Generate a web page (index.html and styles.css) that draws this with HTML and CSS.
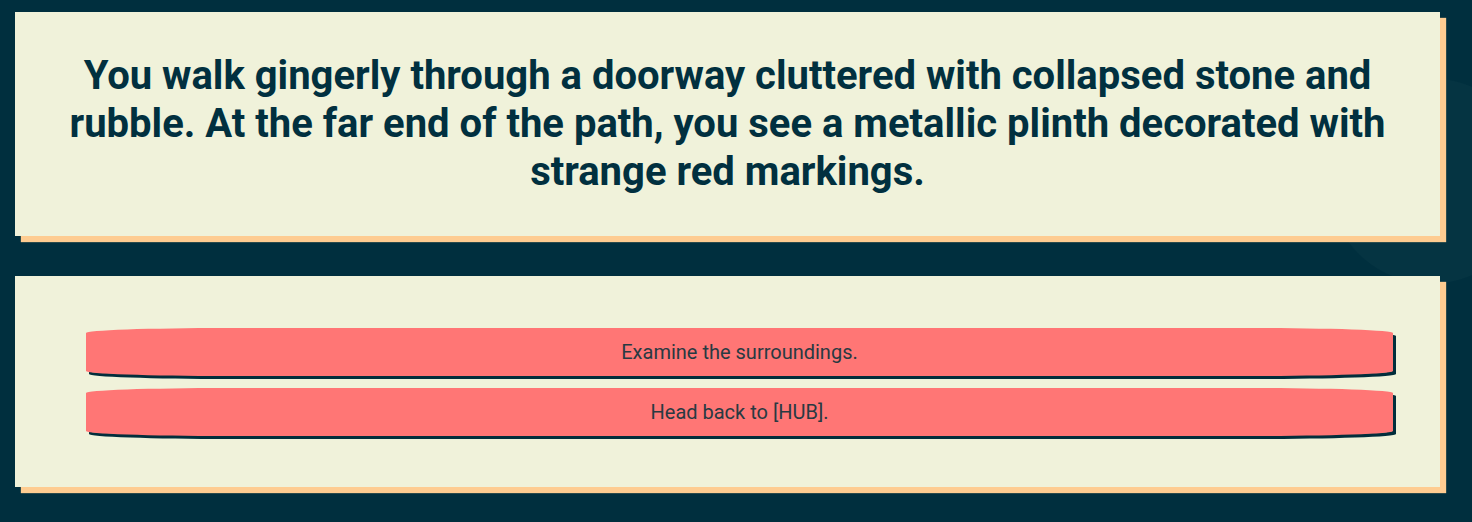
FILE: index.html
```html
<!DOCTYPE html>
<html lang="en">
<head>
<meta charset="utf-8">
<title>Adventure</title>
<link rel="stylesheet" href="styles.css">
</head>
<body>
<main class="page">
  <section class="card story">
    <h1 class="story-text">You walk gingerly through a doorway cluttered with collapsed stone and rubble. At the far end of the path, you see a metallic plinth decorated with strange red markings.</h1>
  </section>
  <section class="card choices">
    <button class="choice" type="button">Examine the surroundings.</button>
    <button class="choice" type="button">Head back to [HUB].</button>
  </section>
</main>
</body>
</html>
```

FILE: styles.css
```css
html, body {
  margin: 0;
  padding: 0;
}

body {
  width: 1472px;
  height: 522px;
  overflow: hidden;
  background:
    radial-gradient(circle at 1431px 181px, #053442 0, #053442 102px, rgba(5, 52, 66, 0) 103px),
    #002f3e;
  font-family: Roboto, "Liberation Sans", Arial, sans-serif;
}

.page {
  display: flex;
  flex-direction: column;
  gap: 40px;
  padding: 12px 32px 0 15px;
}

.card {
  background: #f0f2da;
  box-shadow: 6px 6px 1px #fecc91;
}

.story {
  padding: 40px 40px;
  height: 144px;
}

.story-text {
  margin: 0;
  text-align: center;
  font-size: 40px;
  line-height: 48px;
  font-weight: 700;
  color: #01303f;
}

.choices {
  display: flex;
  flex-direction: column;
  gap: 12px;
  padding: 52px 47px 51px 71px;
}

.choice {
  display: block;
  width: 100%;
  height: 48px;
  margin: 0;
  padding: 0;
  border: 0;
  background: #ff7675;
  color: #283a42;
  font-family: Roboto, "Liberation Sans", Arial, sans-serif;
  font-size: 20px;
  line-height: 48px;
  text-align: center;
  border-radius: 140px / 5px;
  box-shadow: 3px 3px 0 #022e3c;
  cursor: pointer;
}
```
